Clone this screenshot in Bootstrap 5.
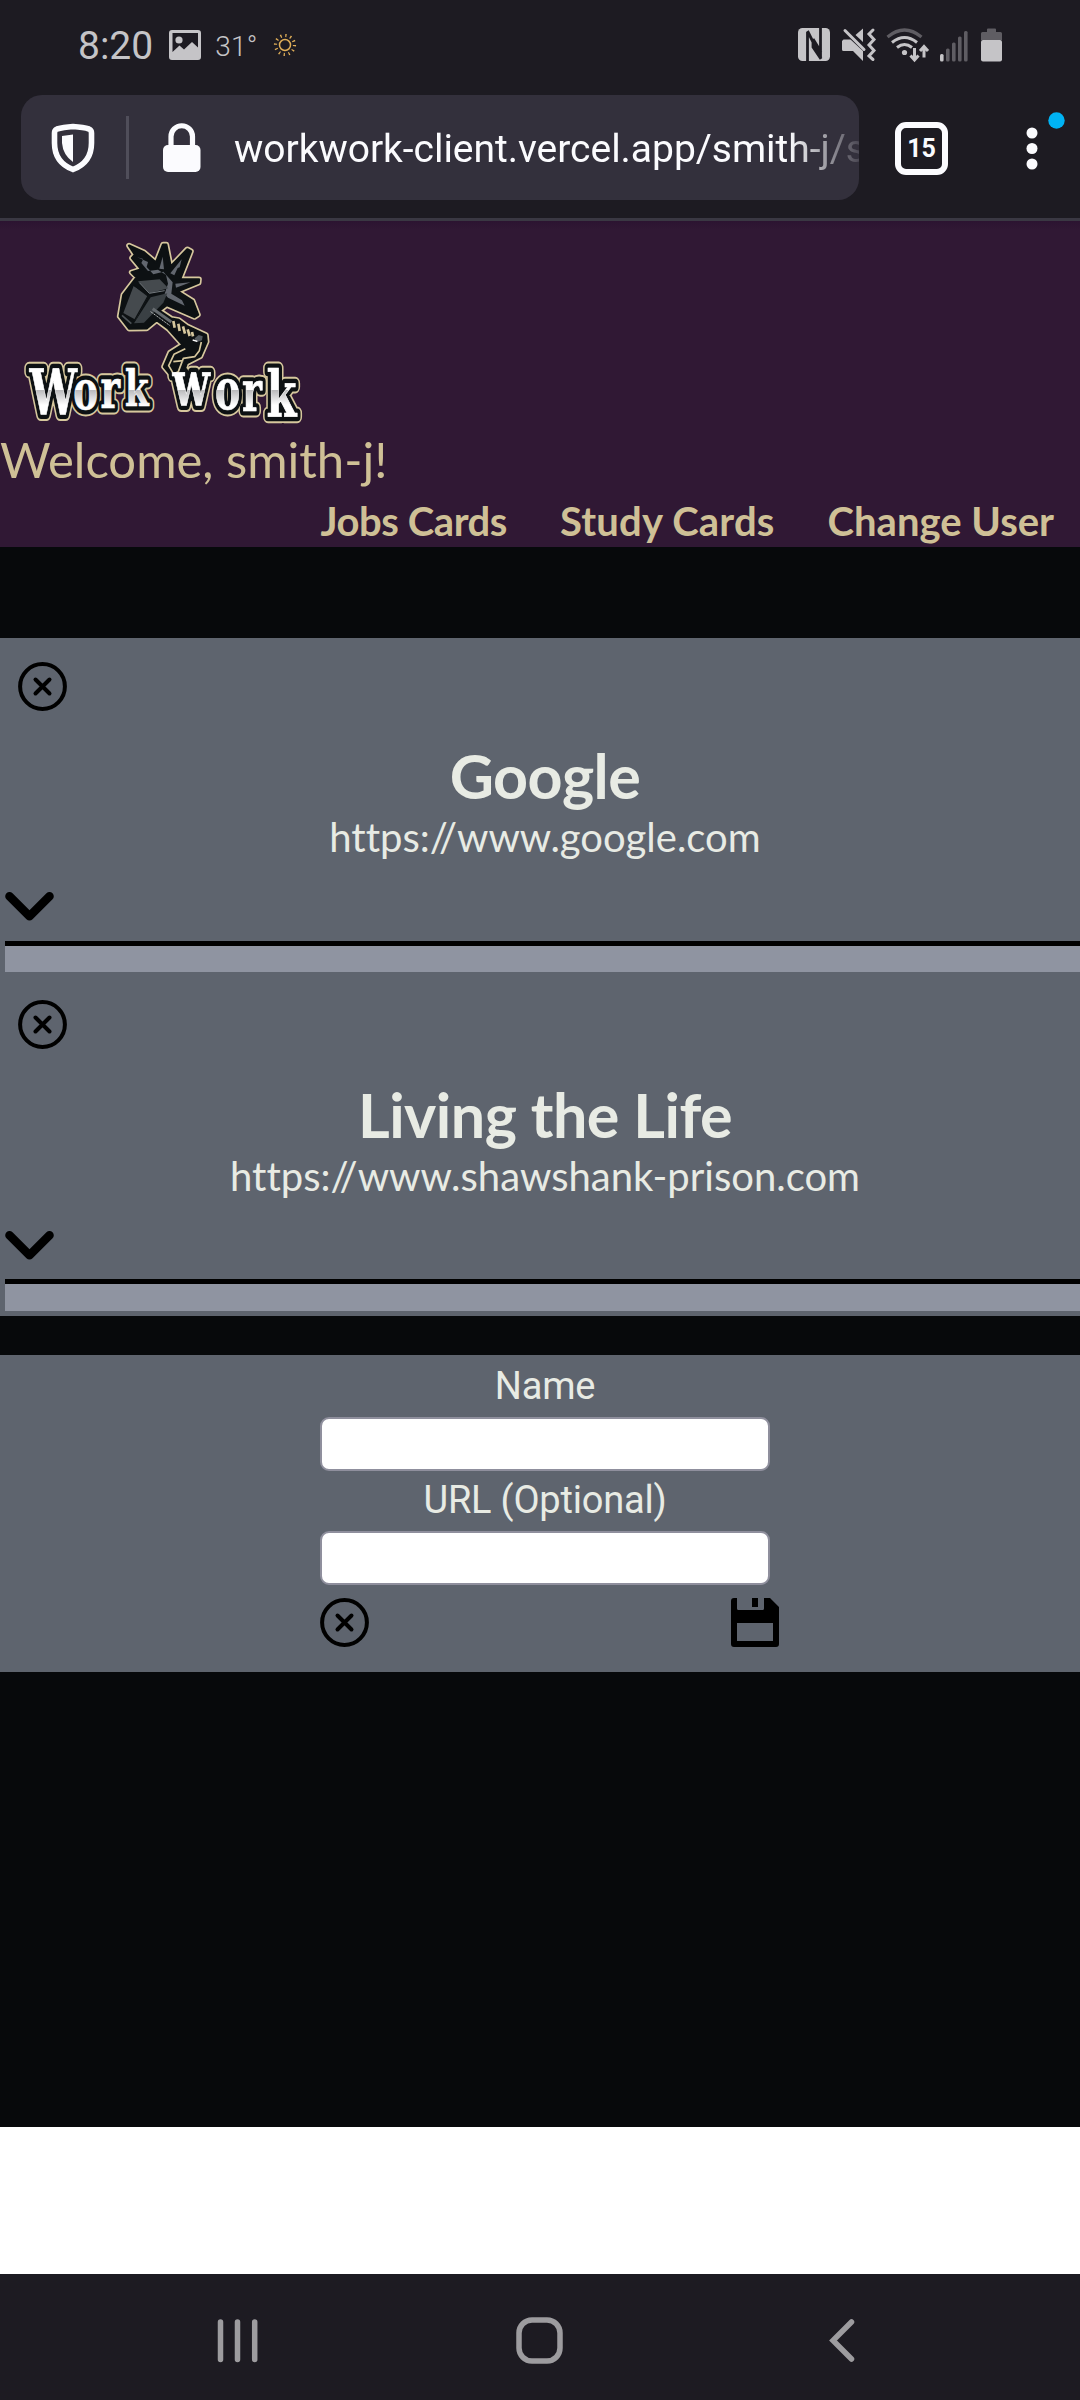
<!DOCTYPE html>
<html lang="en">
<head>
<meta charset="utf-8">
<meta name="viewport" content="width=device-width, initial-scale=1">
<title>Work Work</title>
<link href="https://cdn.jsdelivr.net/npm/bootstrap@5.3.0/dist/css/bootstrap.min.css" rel="stylesheet">
<style>
body{background:#fff;width:1080px;height:2400px;overflow:hidden;font-family:Lato,"Open Sans",sans-serif;font-variant-ligatures:none}
svg{display:block;flex:none}
.chrome-bar{background:#1d1b22;font-family:Roboto,sans-serif}
.status{height:95px;padding:0 76px 0 78px;color:#c5c4c7}
.clock{font-size:39px;line-height:40px;margin-top:-3px}
.temp{font-size:28px;line-height:30px;font-weight:300;margin:-2px 0 0 14px;letter-spacing:.2px}
.addressbar{height:123px;padding-left:21px}
.url-pill{width:838px;height:105px;border-radius:21px;background:#33303c;color:#fbfbfe;overflow:hidden;padding-left:30px}
.url-text{font-size:39px;line-height:60px;white-space:nowrap;width:626px;margin:2px 0 0 33px;overflow:hidden;letter-spacing:-.03px;-webkit-mask-image:linear-gradient(90deg,#000 555px,transparent 635px);mask-image:linear-gradient(90deg,#000 555px,transparent 635px)}
.sep{width:3px;height:63px;background:#504e5a;margin-left:31px}
.tab-count{width:53px;height:53px;border:6px solid #fbfbfe;border-radius:11px;color:#fbfbfe;font:700 25px/42px Roboto,sans-serif;margin:1px 0 0 36px}
.seam{height:3px;background:#3a3843}
.app-head{background:linear-gradient(#2c1431,#301834 9px);height:326px;color:#cfc096}
.welcome{font-size:49px;line-height:50px}
.links{gap:53px;padding:13px 26px 0 0;font-weight:700;font-size:40px;line-height:48px}
.links a{color:inherit;text-decoration:none}
.links a:first-child{letter-spacing:-.45px}
.links a:nth-child(2){letter-spacing:.2px}
.stage{background:#07090b;height:1580px;padding-top:91px;color:#e8ebe4}
.panel{background:#5e646e}
.entry{padding-left:5px}
.entry .btn,.maker .btn{line-height:0}
.first{padding-top:24px}
.second{padding-top:28px;padding-bottom:5px}
.entry h2{font-size:61px;line-height:70px;font-weight:700;margin:30px 0 1px 5px;letter-spacing:-.5px}
.entry p{font-size:40px;line-height:50px;margin:0 0 20px 5px}
.second h2{margin-top:31px}
.rule{height:5px;background:#000;margin-top:10px}
.second .rule{margin-top:9px}
.tray{height:26px;background:#8f94a1}
.second .tray{height:27px}
.maker{margin-top:39px;height:317px;padding:2px 0 0 320px;font-family:Roboto,sans-serif}
.maker label{font-size:38px;line-height:58px;letter-spacing:-.2px}
.maker .form-control{height:54px;border:2px solid #8f8f9d;border-radius:9px;background:#fff;padding:0 8px}
.fields{width:450px}
.tools{width:459px;margin-top:13px}
.android-nav{height:126px;background:#1d1b22;margin-top:147px}
</style>
</head>
<body>
<svg width="0" height="0" class="position-absolute">
<defs>
<symbol id="close" viewBox="0 0 49 49"><g fill="none" stroke="#000" stroke-width="4" stroke-linecap="round"><circle cx="24.5" cy="24.5" r="22.4"/><path d="M17.5 17.5l14 14M31.5 17.5l-14 14"/></g></symbol>
<symbol id="chev" viewBox="0 0 49 49"><path d="M4.5 14.3L24.5 34.3L44.5 14.3" fill="none" stroke="#000" stroke-width="8.6" stroke-linecap="round" stroke-linejoin="round"/></symbol>
</defs>
</svg>

<div class="chrome-bar">
  <div class="status d-flex align-items-center">
    <span class="clock">8:20</span>
    <svg width="32" height="32" viewBox="0 0 32 32" style="margin:-5px 0 0 16px"><path fill="#c5c4c7" fill-rule="evenodd" d="M3 1h26a3 3 0 0 1 3 3v24a3 3 0 0 1-3 3H3a3 3 0 0 1-3-3V4a3 3 0 0 1 3-3zM3.500 4v19l7-6.500 4.500 4 8-7.500 6 5.500V4z"/><circle cx="10" cy="11" r="3.600" fill="#c5c4c7"/></svg>
    <span class="temp">31°</span>
    <svg width="24" height="24" viewBox="-12 -12 24 24" style="margin:-5px 0 0 16px"><g fill="none" stroke="#dfae58" stroke-width="1.500"><circle r="5.500"/><circle r="9.500" stroke-width="3.200" stroke-dasharray="1.300 3.674"/></g></svg>
    <svg class="ms-auto" width="206" height="36" viewBox="0 0 206 36" style="margin-top:-6px">
      <g fill="#c5c4c7">
        <rect y="1" width="32" height="33" rx="4.500"/>
        <path d="M45.500 12.500h7L65 24v10l-10-10h-9.500a1.500 1.500 0 0 1-1.500-1.500V14zM57.500 8L65 1.500V15z"/>
        <circle cx="106.500" cy="25.500" r="2.600"/>
        <rect x="142" y="27" width="3.600" height="7.500" rx="1.500"/>
        <rect x="183" y="13" width="21" height="21.500" rx="2"/>
      </g>
      <path d="M9.500 35V5M9.500 4L23 31M15 12v8l8 12M22.500 1v30M15 12l8 13" fill="none" stroke="#1d1b22" stroke-width="2.800"/>
      <g fill="none" stroke="#c5c4c7" stroke-width="3">
        <path d="M47 3.500l19 19M75 3l-4 4 5 5.500-5 5.500 5 5.500-5 5.500 4 3.500" stroke-linecap="round"/>
        <path d="M94 15.500q12.500-10 25 0M99 20.500q7.500-6 15 0"/>
        <path d="M116.500 21v11M112.500 28.500l4 4.500 4-4.500M126 30.500V20M122 24l4-4.500 4 4.500"/>
      </g>
      <path d="M89.500 10q17-14 34 0" fill="none" stroke="#5f5d63" stroke-width="3.200"/>
      <g fill="#5f5d63"><rect x="148" y="21.500" width="3.600" height="13" rx="1.500"/><rect x="154" y="15.500" width="3.600" height="19" rx="1.500"/><rect x="160" y="9.500" width="3.600" height="25" rx="1.500"/><rect x="166" y="4" width="3.600" height="30.500" rx="1.500"/><path d="M183 13V6.500a1.500 1.500 0 0 1 1.500-1.500h4.500V2.500a1 1 0 0 1 1-1h7a1 1 0 0 1 1 1V5h4.500a1.500 1.500 0 0 1 1.500 1.500V13z"/></g>
    </svg>
  </div>
  <div class="addressbar d-flex align-items-start">
    <div class="url-pill d-flex align-items-center">
      <svg width="44" height="50" viewBox="0 0 44 50"><path d="M22 3.500C29 4 35 5 38 6q2.500 1 2.500 4v10c0 14-8 22.500-18.500 26.500C11.500 42.500 3.500 34 3.500 20V10q0-3 2.500-4 6-1.600 16-2.500z" fill="none" stroke="#fbfbfe" stroke-width="5.600"/><path d="M22 11.500V39q-10-7-11-19v-7z" fill="#fbfbfe"/></svg>
      <div class="sep"></div>
      <svg width="38" height="50" viewBox="0 0 38 50" style="margin-left:34px"><rect y="22" width="37.500" height="27" rx="5" fill="#fbfbfe"/><path d="M8 24V13.500a10.700 10.700 0 0 1 21.500 0V24" fill="none" stroke="#fbfbfe" stroke-width="5.200"/></svg>
      <div class="url-text">workwork-client.vercel.app/smith-j/s</div>
    </div>
    <div class="d-flex align-items-center" style="height:105px">
      <div class="tab-count text-center">15</div>
      <svg width="60" height="80" viewBox="0 0 60 80" style="margin:-31px 0 0 66px"><g fill="#fbfbfe"><circle cx="18" cy="41" r="5.500"/><circle cx="18" cy="56.500" r="5.500"/><circle cx="18" cy="72" r="5.500"/></g><circle cx="42.500" cy="28.500" r="8.200" fill="#00b3f4"/></svg>
    </div>
  </div>
  <div class="seam"></div>
</div>

<header class="app-head">
  <svg width="330" height="213" viewBox="0 3 990 639">
    <defs>
      <linearGradient id="steel" gradientUnits="userSpaceOnUse" x1="0" y1="450" x2="0" y2="590"><stop offset="0" stop-color="#fff"/><stop offset=".42" stop-color="#fff"/><stop offset=".43" stop-color="#b9b9bb"/><stop offset=".75" stop-color="#fff"/></linearGradient>
      <g id="mass">
        <path d="M387 77L432 97L468 128L489 74L499 74L512 140L562 88L573 94L540 178L597 178L596 188L532 214L578 243L594 284L583 291L500 255L478 272L514 296L536 300L560 318L618 345L620 365L601 409L560 430L549 462L520 474L492 440L510 398L548 374L505 326L470 300L440 325L388 326L359 289L370 225L410 172L395 157L424 148L396 114L405 104Z"/>
      </g>
      <text id="brand" transform="scale(.75 1)" font-family="DejaVu Serif Condensed, DejaVu Serif, serif" font-weight="700"><tspan x="118" y="584" font-size="188">W</tspan><tspan x="293" y="568" font-size="165">o</tspan><tspan x="402" y="564" font-size="165">r</tspan><tspan x="500" y="558" font-size="152">k</tspan><tspan x="620" y="556" font-size="60"> </tspan><tspan x="690" y="556" font-size="192">w</tspan><tspan x="860" y="566" font-size="168">o</tspan><tspan x="968" y="572" font-size="168">r</tspan><tspan x="1066" y="588" font-size="192">k</tspan></text>
    </defs>
    <g stroke-linejoin="round">
      <use href="#mass" fill="#d6c79d" stroke="#d6c79d" stroke-width="17"/>
      <use href="#brand" fill="#d6c79d" stroke="#d6c79d" stroke-width="39"/>
      <use href="#mass" fill="#0d1113" stroke="#0d1113" stroke-width="7"/>
      <use href="#brand" fill="#0d1113" stroke="#0d1113" stroke-width="27"/>
      <path d="M412 112l32 14-4 15 20 22 30-8 28 32-4 34 32 20 8 16-50-24-10-12 10-30-6-26-24-16-30 4-20-24 6-12zM488 110l-10 36 14 2zM545 118l-34 42 12 6 10-22 6-2zM572 187l-46 4 2 12z" fill="#62676f"/>
      <path d="M414 184l65-6 26 27-56 15zM401 198l44 29-38 72-37-20z" fill="#454a4e"/>
      <path d="M452 232l50-12-12 28-58 60-30 2z" fill="#3a4044"/>
      <path d="M402 196l42 32-42 76M412 186l38 40 46-14" fill="none" stroke="#0d1113" stroke-width="4"/>
      <path d="M418 188l30 32 46-8" fill="none" stroke="#747a7f" stroke-width="3"/>
      <path d="M366 286l28 25" stroke="#4c5256" stroke-width="5"/>
      <path d="M458 266l56 40" stroke="#656a6e" stroke-width="9"/>
      <path d="M452 275l58 42" stroke="#e8e8e8" stroke-width="2.500" stroke-dasharray="4 2"/>
      <path d="M520 303l4 20M535 311l4 22M549 319l6 22M563 328l6 20M576 336l3 13" stroke="#d6c79d" stroke-width="8"/>
      <path d="M584 355l12-10 12 4-2 12-18 6z" fill="#555b60"/><path d="M578 360l14 4" stroke="#fff" stroke-width="4"/>
      <path d="M604 366l-6 26-14 18-34 5-15 40-15 7M556 386l-34 17-16 34 12 20M520 425l30-3" fill="none" stroke="#d6c79d" stroke-width="5"/>
      <use href="#brand" fill="url(#steel)" stroke="#fff" stroke-width="2"/>
    </g>
  </svg>
  <div class="welcome">Welcome, smith-j!</div>
  <nav class="links d-flex justify-content-end"><a href="#">Jobs Cards</a><a href="#">Study Cards</a><a href="#">Change User</a></nav>
</header>

<main class="stage">
  <section class="panel entry first">
    <button class="btn p-0 border-0 d-block" style="margin-left:13px" aria-label="Delete"><svg width="49" height="49"><use href="#close"/></svg></button>
    <h2 class="text-center">Google</h2>
    <p class="text-center">https://www.google.com</p>
    <button class="btn p-0 border-0 d-block" aria-label="Expand"><svg width="49" height="49"><use href="#chev"/></svg></button>
    <div class="rule"></div><div class="tray"></div>
  </section>
  <section class="panel entry second">
    <button class="btn p-0 border-0 d-block" style="margin-left:13px" aria-label="Delete"><svg width="49" height="49"><use href="#close"/></svg></button>
    <h2 class="text-center">Living the Life</h2>
    <p class="text-center">https://www.shawshank-prison.com</p>
    <button class="btn p-0 border-0 d-block" aria-label="Expand"><svg width="49" height="49"><use href="#chev"/></svg></button>
    <div class="rule"></div><div class="tray"></div>
  </section>
  <form class="panel maker">
    <div class="fields">
      <label for="n" class="d-block text-center">Name</label>
      <input id="n" class="form-control" style="margin-top:2px">
      <label for="u" class="d-block text-center">URL (Optional)</label>
      <input id="u" class="form-control" style="margin-top:2px">
    </div>
    <div class="tools d-flex justify-content-between">
      <button type="button" class="btn p-0 border-0" aria-label="Cancel"><svg width="49" height="49"><use href="#close"/></svg></button>
      <button type="button" class="btn p-0 border-0" aria-label="Save"><svg width="48" height="49" viewBox="0 0 48 49"><path fill-rule="evenodd" d="M3 0h3v10.500A1.500 1.500 0 0 0 7.500 12h24a1.500 1.500 0 0 0 1.500-1.500V0h6l9 9v37a3 3 0 0 1-3 3H3a3 3 0 0 1-3-3V3a3 3 0 0 1 3-3zM6 25v18h36V25zM21 0h6v9h-6z"/></svg></button>
    </div>
  </form>
</main>

<footer class="android-nav">
  <svg width="1080" height="126" viewBox="0 2274 1080 126" fill="none" stroke="#9d9c9f" stroke-linecap="round"><path stroke-width="5.500" d="M220.500 2322v37.500M237.500 2322v37.500M254.700 2322v37.500"/><rect x="519" y="2320" width="41" height="41" rx="13" stroke-width="5.500"/><path d="M851.500 2322l-18.500 18.500 18.500 18.500" stroke-width="5.500"/></svg>
</footer>
<script src="https://cdn.jsdelivr.net/npm/bootstrap@5.3.0/dist/js/bootstrap.bundle.min.js"></script>
</body>
</html>
